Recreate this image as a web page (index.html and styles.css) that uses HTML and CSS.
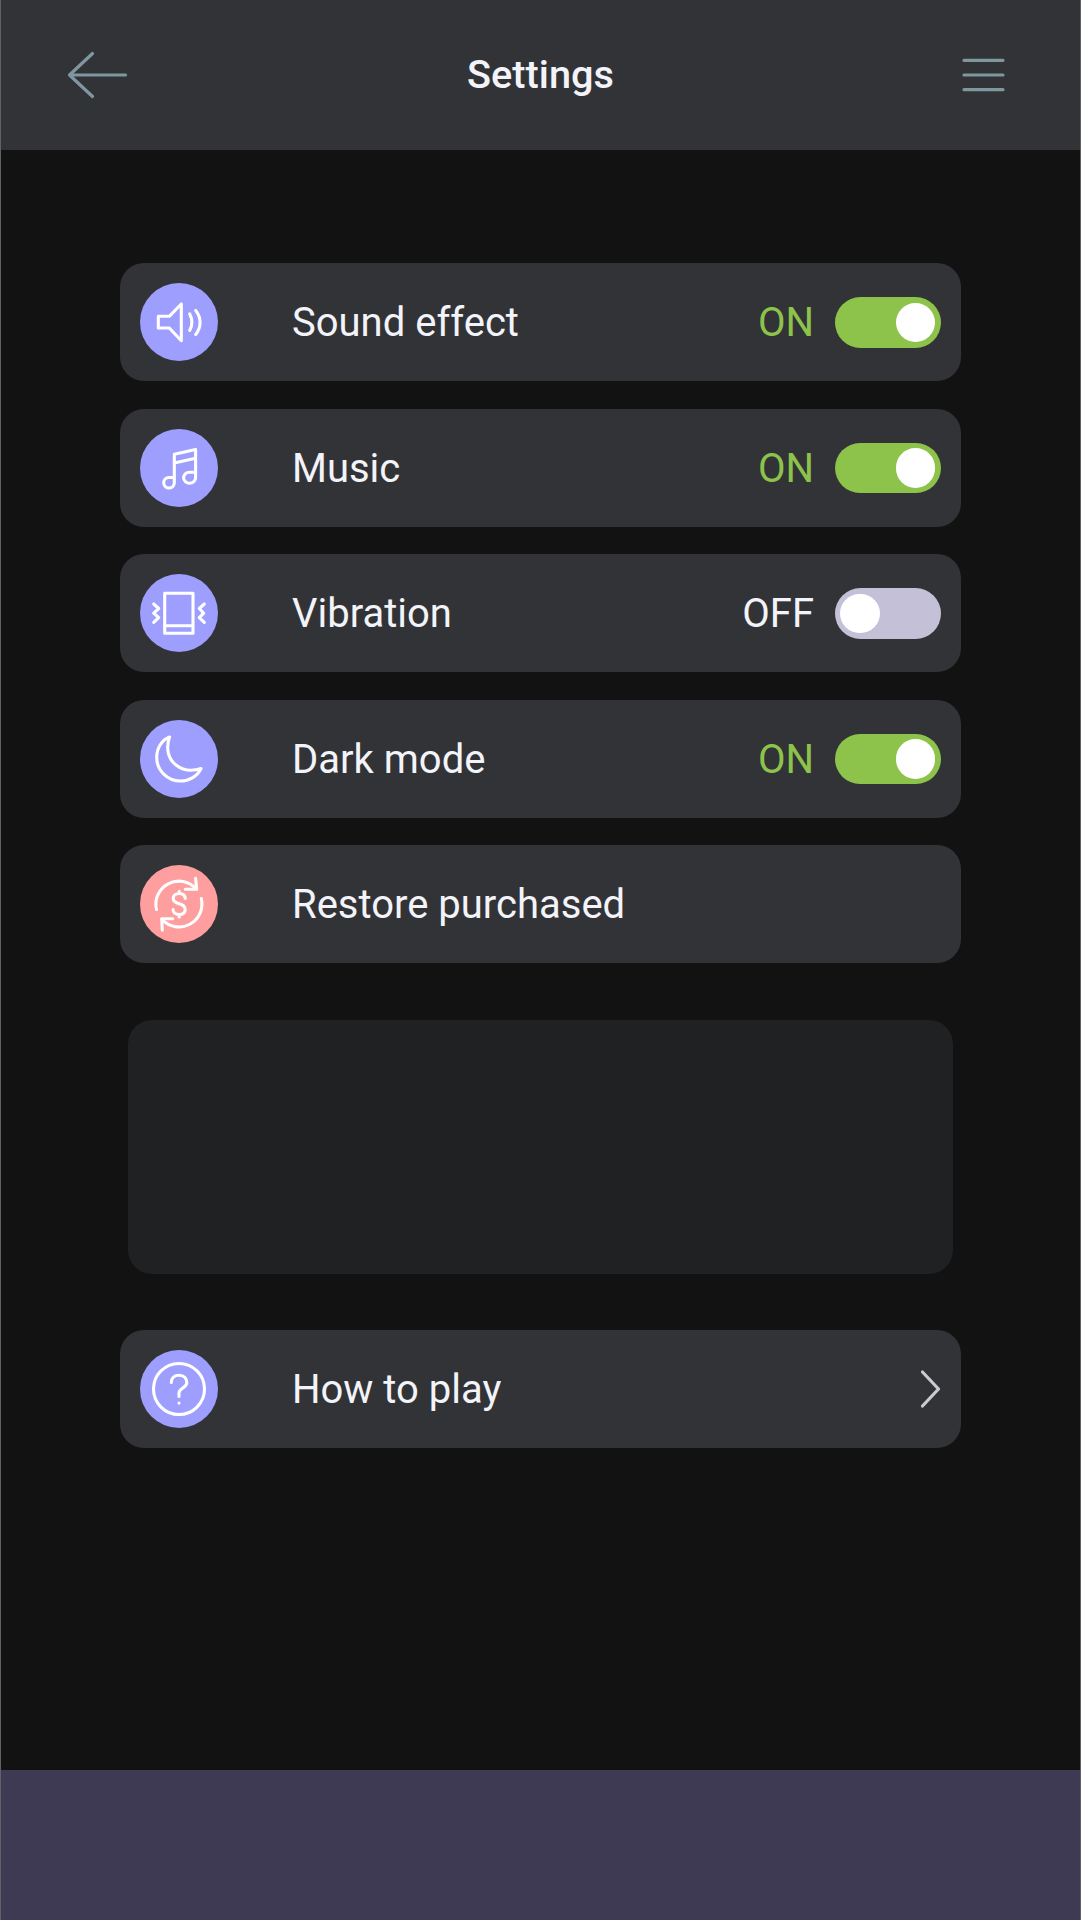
FILE: index.html
```html
<!DOCTYPE html>
<html lang="en">
<head>
<meta charset="utf-8">
<title>Settings</title>
<link rel="stylesheet" href="styles.css">
</head>
<body>
<div class="screen">
  <header class="header">
    <svg class="back" viewBox="0 0 61 48"><path d="M58.500 24H2.500M25.500 2.500L2.500 24l23 21.500"/></svg>
    <h1 class="title">Settings</h1>
    <svg class="menu" viewBox="0 0 44 36"><path d="M2 3.300h39M2 18h39M2 32.700h39"/></svg>
  </header>
  <main class="content">
    <section class="rows">
      <div class="row">
        <svg class="icon" viewBox="0 0 78 78"><path d="M18.300 33.300h11L41.300 21v36.700L29.300 45h-11zM49.700 30.900q4.400 8.300 0 16.600M55.700 27.500c5.800 7 5.800 17 0 24"/></svg>
        <span class="label">Sound effect</span>
        <span class="state on">ON</span><span class="toggle on"></span>
      </div>
      <div class="row">
        <svg class="icon" viewBox="0 0 78 78"><path d="M34.300 48.500H28a5.300 5.300 0 1 0 6.300 5.200V25.300L55.600 20.600V48.700A6 5.500 0 1 1 49.500 43.200H55.600M34.300 34L55.600 29.300"/></svg>
        <span class="label">Music</span>
        <span class="state on">ON</span><span class="toggle on"></span>
      </div>
      <div class="row">
        <svg class="icon" viewBox="0 0 78 78"><path d="M24.700 19.300H53V59.300H24.700zM24.700 51.700H53M13.700 30l5 4.500-5 4.700 5 4.500-5 4.700M64.300 30l-5 4.500 4.400 4.700-4.400 4.500 5 4.700"/></svg>
        <span class="label">Vibration</span>
        <span class="state">OFF</span><span class="toggle"></span>
      </div>
      <div class="row">
        <svg class="icon" viewBox="0 0 78 78"><path d="M29.600 17C21.500 20 16.700 28.500 16.700 37.300C16.700 50.500 27.500 61 40.500 61C49.500 61 57.500 56 61 48.600C52 51.500 43 50.500 36 45C28 38.800 25.600 28 29.600 17z"/></svg>
        <span class="label">Dark mode</span>
        <span class="state on">ON</span><span class="toggle on"></span>
      </div>
      <div class="row">
        <svg class="icon coral" viewBox="0 0 78 78"><path d="M16.500 44.500A23 23 0 0 1 56 23.800M55.600 13.300l1.100 11H45.300M61.300 33.500A23 23 0 0 1 22 54.500M22.300 65.200L21.700 53.700H32.700"/><path d="M45.200 33.500c-.2-3.200-2.500-5-6-5s-6 2-6 5c0 7 12 3.500 12 11 0 3.200-2.400 5-6 5s-6-2-6.200-5M39.200 28V26.300M39.200 52V50"/></svg>
        <span class="label">Restore purchased</span>
      </div>
    </section>
    <section class="panel"></section>
    <section class="rows">
      <div class="row">
        <svg class="icon" viewBox="0 0 78 78"><circle cx="39" cy="39" r="25.500"/><path d="M31.300 32.500C31.300 28 34.500 25.200 39.200 25.200S46.800 28.500 46.800 32.800C46.800 38 39 38 39 43V46.500M39 53v.1"/></svg>
        <span class="label">How to play</span>
        <svg class="chevron" viewBox="0 0 20 38"><path d="M1.500 2l16 17-16 17"/></svg>
      </div>
    </section>
  </main>
  <footer class="banner"></footer>
</div>
</body>
</html>
```
FILE: styles.css
```css
* {
  box-sizing: border-box;
}

body {
  margin: 0;
  background: #121212;
  color: #f3f4f9;
  font-family: Roboto, sans-serif;
}

svg {
  fill: none;
  stroke-linecap: round;
  stroke-linejoin: round;
  flex: none;
}

.screen {
  height: 1920px;
  display: flex;
  flex-direction: column;
  border: solid #606163;
  border-width: 0 1px;
}

.header {
  height: 150px;
  padding: 0 74px 0 66px;
  display: grid;
  grid-template-columns: 1fr auto 1fr;
  align-items: center;
  background: #323337;
}

.back,
.menu {
  stroke: #7f979f;
  stroke-width: 3.200;
}

.back {
  width: 61px;
  height: 48px;
}

.menu {
  width: 44px;
  height: 36px;
  justify-self: end;
}

.title {
  margin: 0;
  padding: 0 0 1px 8px;
  font-size: 39.700px;
  font-weight: 500;
  line-height: 47px;
}

.content {
  flex: 1;
  padding: 113.200px 119.300px 0;
}

.rows {
  display: flex;
  flex-direction: column;
  gap: 27.200px;
}

.row {
  height: 118.300px;
  padding: 0 19.700px;
  display: flex;
  align-items: center;
  background: #323337;
  border-radius: 24px;
}

.icon {
  width: 78px;
  height: 78px;
  border-radius: 50%;
  background: #9e9eff;
  stroke: #fff;
  stroke-width: 3.100;
}

.icon.coral {
  background: #ff9e9e;
}

.label {
  flex: 1;
  padding: 2px 0 0 74px;
  font-size: 40px;
  line-height: 48px;
}

.state {
  padding-top: 2px;
  margin-right: 20.500px;
  font-size: 40px;
  line-height: 48px;
}

.state.on {
  color: #8dc34b;
}

.toggle {
  width: 106.500px;
  height: 50.500px;
  padding: 0 5.700px;
  display: flex;
  align-items: center;
  border-radius: 26px;
  background: #c4c0d7;
}

.toggle.on {
  justify-content: flex-end;
  background: #8dc34b;
}

.toggle::before {
  content: "";
  width: 39.500px;
  height: 39.500px;
  border-radius: 50%;
  background: #fff;
}

.chevron {
  width: 20px;
  height: 38px;
  stroke: #c9cbd0;
  stroke-width: 3.200;
}

.panel {
  height: 254.400px;
  margin: 56.200px 7.700px;
  border-radius: 24px;
  background: #202123;
}

.banner {
  height: 150px;
  background: #3f3a53;
}
```
